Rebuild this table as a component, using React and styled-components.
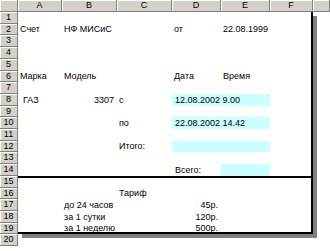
import React from "react";
import styled, { createGlobalStyle } from "styled-components";

const GlobalStyle = createGlobalStyle`
  html, body {
    margin: 0;
    padding: 0;
    background: #ffffff;
    overflow: hidden;
  }
  body {
    font-family: "Liberation Sans", Arial, sans-serif;
    font-size: 9px;
    line-height: 1;
    color: #000;
  }
`;

const ROW_HEIGHTS = [12, 11, 12, 12, 12, 11, 12, 12, 11, 12, 12, 11, 12, 12, 12, 11, 12, 12, 11, 12];
const COLS = ["A", "B", "C", "D", "E", "F"];

const Sheet = styled.div`
  display: grid;
  grid-template-columns: 18px 44px 55px 55px 49px 49px 43px 17px;
  grid-template-rows: 12px ${ROW_HEIGHTS.map((h) => `${h}px`).join(" ")};
  align-content: start;
  width: 330px;
  height: 251px;
  background: #ffffff;
`;

const HeaderBase = styled.div`
  display: flex;
  align-items: center;
  justify-content: center;
  box-sizing: border-box;
  min-height: 0;
  background: #d4d0c8;
  border-right: 1px solid #808080;
  border-bottom: 1px solid #808080;
  box-shadow: inset 1px 1px 0 #ffffff;
  color: #000;
  overflow: hidden;
`;

const Corner = styled(HeaderBase)`
  grid-column: 1;
  grid-row: 1;
`;

const ColHeader = styled(HeaderBase)`
  grid-row: 1;
  grid-column: ${(p) => p.$col};
`;

const RowHeader = styled(HeaderBase)`
  grid-column: 1;
  grid-row: ${(p) => p.$row};
`;

const Cell = styled.div`
  grid-row: ${(p) => p.$row};
  grid-column: ${(p) => p.$col} / span ${(p) => p.$span || 1};
  display: flex;
  align-items: center;
  justify-content: ${(p) => (p.$right ? "flex-end" : "flex-start")};
  box-sizing: border-box;
  min-height: 0;
  padding: 0 ${(p) => (p.$right ? "3px" : "0")} 0 ${(p) => p.$indent ?? 2}px;
  background: ${(p) => (p.$fill ? "#ccffff" : "transparent")};
  white-space: nowrap;
  min-width: 0;
`;

const Frame = styled.div`
  grid-column: 2 / 8;
  grid-row: 2 / 21;
  border-right: 2px solid #000;
  border-bottom: 2px solid #000;
  box-shadow: 4px 4px 0 #808080;
  pointer-events: none;
`;

const Divider = styled.div`
  grid-column: 2 / 8;
  grid-row: 16;
  border-top: 2px solid #000;
  pointer-events: none;
`;

// [sheet row, column (1 = A), text, options]
const cells = [
  [2, 1, "Счет"],
  [2, 2, "НФ МИСиС"],
  [2, 4, "от"],
  [2, 5, "22.08.1999"],
  [6, 1, "Марка"],
  [6, 2, "Модель"],
  [6, 4, "Дата"],
  [6, 5, "Время"],
  [8, 1, "ГАЗ", { indent: 5 }],
  [8, 2, "3307", { right: true }],
  [8, 3, "с"],
  [8, 4, "12.08.2002 9.00", { fill: true, indent: 3, span: 2 }],
  [10, 3, "по"],
  [10, 4, "22.08.2002 14.42", { fill: true, indent: 3, span: 2 }],
  [12, 3, "Итого:"],
  [12, 4, "", { fill: true, span: 2 }],
  [14, 4, "Всего:", { indent: 3 }],
  [14, 5, "", { fill: true }],
  [16, 3, "Тариф"],
  [17, 2, "до 24 часов"],
  [17, 4, "45р.", { right: true }],
  [18, 2, "за 1 сутки"],
  [18, 4, "120р.", { right: true }],
  [19, 2, "за 1 неделю"],
  [19, 4, "500р.", { right: true }],
];

export default function App() {
  return (
    <>
      <GlobalStyle />
      <Sheet>
        <Corner />
        {COLS.map((c, i) => (
          <ColHeader key={c} $col={i + 2}>
            {c}
          </ColHeader>
        ))}
        <ColHeader $col={8} />
        {ROW_HEIGHTS.map((_, i) => (
          <RowHeader key={i} $row={i + 2}>
            {i + 1}
          </RowHeader>
        ))}
        {cells.map(([row, col, text, opt = {}]) => (
          <Cell
            key={`${row}-${col}`}
            $row={row + 1}
            $col={col + 1}
            $span={opt.span}
            $fill={opt.fill}
            $right={opt.right}
            $indent={opt.indent}
          >
            {text}
          </Cell>
        ))}
        <Divider />
        <Frame />
      </Sheet>
    </>
  );
}
